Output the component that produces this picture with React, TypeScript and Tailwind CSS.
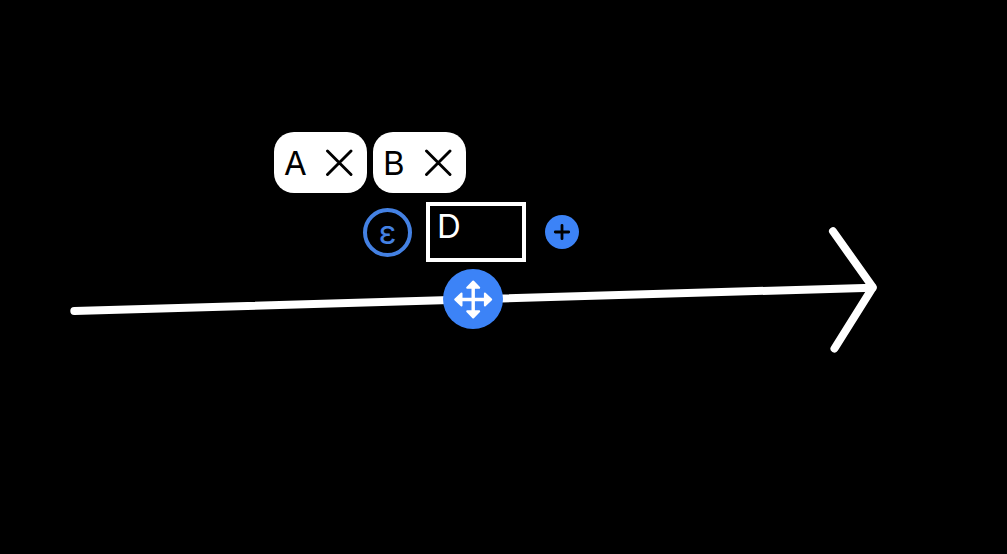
import { useState } from 'react';

function Arrow() {
  return (
    <svg
      className="pointer-events-none absolute left-0 top-0"
      width="1007"
      height="554"
      viewBox="0 0 1007 554"
      fill="none"
      stroke="#fff"
      strokeWidth="8"
      strokeLinecap="round"
      strokeLinejoin="round"
      aria-hidden="true"
    >
      <path d="M74.3 311 L872.5 287.7" />
      <path d="M833 231.3 L872.8 287.3 L834.5 348.5" />
    </svg>
  );
}

function Tag({ name, onRemove }: { name: string; onRemove: () => void }) {
  return (
    <li className="flex h-[61px] items-center gap-[19px] rounded-[20px] bg-white pl-[10px] pr-[14px] text-black">
      <span className="w-[22px]">{name}</span>
      <button type="button" aria-label={`Remove ${name}`} onClick={onRemove}>
        <svg
          className="block"
          width="28"
          height="28"
          viewBox="0 0 28 28"
          fill="none"
          stroke="currentColor"
          strokeWidth="2.9"
          strokeLinecap="round"
          aria-hidden="true"
        >
          <path d="M2.500 2 L26 25.500 M26 2 L2.500 25.500" />
        </svg>
      </button>
    </li>
  );
}

export default function App() {
  const [tags, setTags] = useState(['A', 'B']);
  const [draft, setDraft] = useState('D');

  const addTag = (name: string) => {
    if (name && !tags.includes(name)) setTags([...tags, name]);
  };

  return (
    <main className="relative min-h-screen overflow-hidden bg-black font-['Inter','Liberation_Sans',sans-serif] text-[33px] leading-10 text-white">
      <Arrow />
      <section aria-label="Transition labels" className="absolute left-[274px] top-[132px]">
        <ul className="flex gap-1.5">
          {tags.map((tag) => (
            <Tag key={tag} name={tag} onRemove={() => setTags(tags.filter((t) => t !== tag))} />
          ))}
        </ul>
        <div className="ml-[89px] mt-[9px] flex items-center">
          <button
            type="button"
            aria-label="Add epsilon"
            onClick={() => addTag('ε')}
            className="flex size-[49px] items-center justify-center rounded-full border-4 border-[#4481e3] text-[#4481e3]"
          >
            ε
          </button>
          <textarea
            aria-label="New label"
            rows={1}
            value={draft}
            onChange={(e) => setDraft(e.target.value)}
            className="ml-[14px] block h-[60px] w-[100px] resize-none overflow-hidden border-4 border-white bg-black px-[7px] text-white outline-none"
          />
          <button
            type="button"
            aria-label="Add label"
            onClick={() => addTag(draft)}
            className="ml-[19px] flex size-[34px] items-center justify-center rounded-full bg-[#3c83f7] text-black"
          >
            <svg
              width="18"
              height="18"
              viewBox="0 0 18 18"
              fill="none"
              stroke="currentColor"
              strokeWidth="2.8"
              strokeLinecap="round"
              aria-hidden="true"
            >
              <path d="M9 2.300 V15.700 M2.300 9 H15.700" />
            </svg>
          </button>
        </div>
      </section>
      <button
        type="button"
        aria-label="Move transition"
        className="absolute left-[443px] top-[269px] flex size-[60px] cursor-move items-center justify-center rounded-full bg-[#3c83f7]"
      >
        <svg width="40" height="40" viewBox="0 0 40 40" fill="#fff" stroke="#fff" strokeLinejoin="round" aria-hidden="true">
          <path d="M20.200 6 V34 M6 20.500 H34" strokeWidth="3.4" />
          <path
            strokeWidth="2"
            d="M20.200 2.500 L26.200 8.800 H14.200 Z M20.200 38.500 L26.200 32.200 H14.200 Z M2.200 20.500 L8.500 14.500 V26.500 Z M38.200 20.500 L31.900 14.500 V26.500 Z"
          />
        </svg>
      </button>
    </main>
  );
}
